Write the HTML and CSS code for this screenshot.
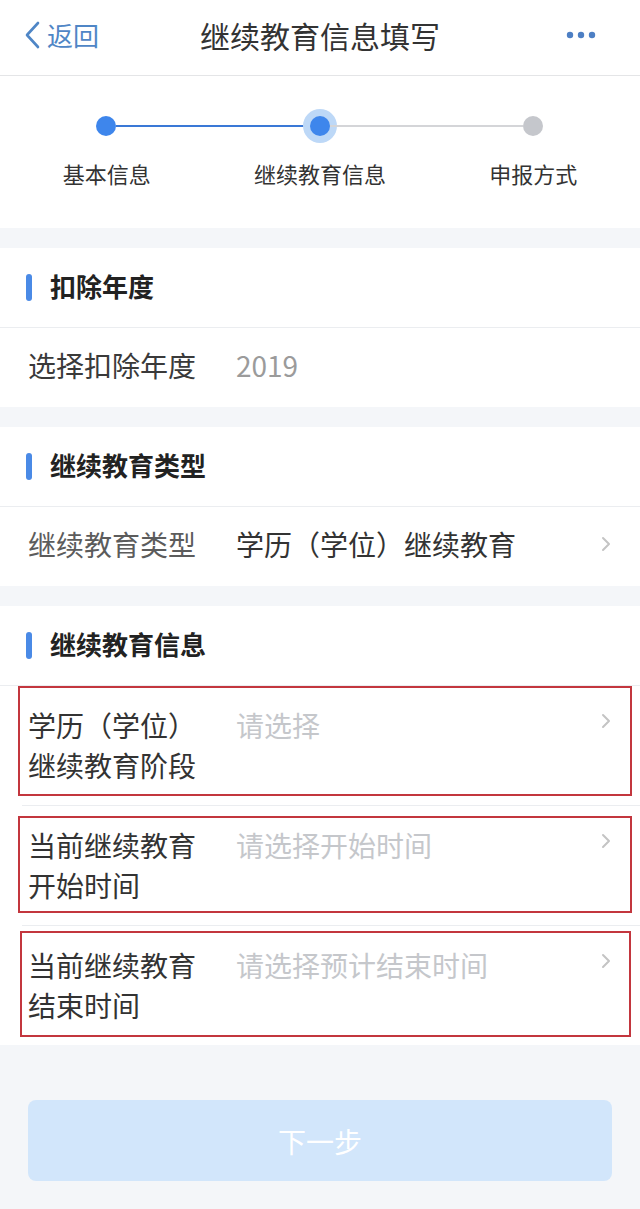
FILE: index.html
```html
<!DOCTYPE html>
<html lang="zh-CN">
<head>
  <meta charset="UTF-8">
  <meta name="viewport" content="width=device-width, initial-scale=1.0">
  <link rel="stylesheet" href="styles.css">
</head>
<body>
  <header class="navbar">
    <a class="nav-back">
      <svg class="back-icon" width="20" height="28" viewBox="0 0 20 28"><path d="M16 2 L5 14 L16 26" fill="none" stroke="#4f86c6" stroke-width="2.6" stroke-linecap="round" stroke-linejoin="round"/></svg>
      <span>返回</span>
    </a>
    <h1 class="nav-title">继续教育信息填写</h1>
    <span class="nav-more">
      <svg width="30" height="8" viewBox="0 0 30 8"><circle cx="4" cy="4" r="3.2" fill="#4d7fc4"/><circle cx="15" cy="4" r="3.2" fill="#4d7fc4"/><circle cx="26" cy="4" r="3.2" fill="#4d7fc4"/></svg>
    </span>
  </header>

  <!-- 步骤条 -->
  <section class="steps">
    <div class="step-track">
      <span class="dot done"></span>
      <span class="bar done"></span>
      <span class="dot current"></span>
      <span class="bar"></span>
      <span class="dot"></span>
    </div>
    <div class="step-labels">
      <span>基本信息</span>
      <span>继续教育信息</span>
      <span>申报方式</span>
    </div>
  </section>

  <section class="card">
    <div class="card-head"><span class="card-mark"></span>扣除年度</div>
    <div class="row">
      <span class="row-label">选择扣除年度</span>
      <span class="row-value muted">2019</span>
    </div>
  </section>

  <section class="card">
    <div class="card-head"><span class="card-mark"></span>继续教育类型</div>
    <div class="row">
      <span class="row-label soft">继续教育类型</span>
      <span class="row-value">学历（学位）继续教育</span>
      <svg class="chevron" width="10" height="16" viewBox="0 0 10 16"><path d="M2 2 L8 8 L2 14" fill="none" stroke="#c4c4c4" stroke-width="2" stroke-linecap="round" stroke-linejoin="round"/></svg>
    </div>
  </section>

  <section class="card">
    <div class="card-head"><span class="card-mark"></span>继续教育信息</div>
    <div class="field">
      <span class="field-label">学历（学位）<br>继续教育阶段</span>
      <span class="field-value">请选择</span>
      <svg class="chevron field-chevron" width="10" height="16" viewBox="0 0 10 16"><path d="M2 2 L8 8 L2 14" fill="none" stroke="#c4c4c4" stroke-width="2" stroke-linecap="round" stroke-linejoin="round"/></svg>
      <span class="mark mark-1"></span>
    </div>
    <div class="field">
      <span class="field-label">当前继续教育<br>开始时间</span>
      <span class="field-value">请选择开始时间</span>
      <svg class="chevron field-chevron" width="10" height="16" viewBox="0 0 10 16"><path d="M2 2 L8 8 L2 14" fill="none" stroke="#c4c4c4" stroke-width="2" stroke-linecap="round" stroke-linejoin="round"/></svg>
      <span class="mark mark-2"></span>
    </div>
    <div class="field">
      <span class="field-label">当前继续教育<br>结束时间</span>
      <span class="field-value">请选择预计结束时间</span>
      <svg class="chevron field-chevron" width="10" height="16" viewBox="0 0 10 16"><path d="M2 2 L8 8 L2 14" fill="none" stroke="#c4c4c4" stroke-width="2" stroke-linecap="round" stroke-linejoin="round"/></svg>
      <span class="mark mark-3"></span>
    </div>
  </section>

  <div class="footer">
    <button class="next-btn">下一步</button>
  </div>
</body>
</html>
```

FILE: styles.css
```css
body {
  margin: 0;
  background: #f4f6f9;
  font-family: "Noto Sans CJK SC", "Noto Sans", sans-serif;
  color: #333;
}

/* 顶部导航 */
.navbar {
  height: 69px;
  padding-bottom: 6px;
  background: #fff;
  border-bottom: 1px solid #e4e5e7;
  display: grid;
  grid-template-columns: 1fr auto 1fr;
  align-items: center;
}

.nav-back {
  display: flex;
  align-items: center;
  padding-left: 22px;
  color: #4f86c6;
  font-size: 26px;
}

.back-icon {
  margin-right: 5px;
}

.nav-title {
  margin: 0;
  font-size: 30px;
  font-weight: normal;
  color: #333;
}

.nav-more {
  justify-self: end;
  display: flex;
  padding-right: 44px;
}

/* 步骤条 */
.steps {
  background: #fff;
  padding: 40px 0 40px;
}

.step-track {
  display: flex;
  align-items: center;
  padding: 0 97px 0 96px;
}

.dot {
  width: 20px;
  height: 20px;
  border-radius: 50%;
  background: #c5c7cc;
  flex-shrink: 0;
}

.dot.done,
.dot.current {
  background: #3e86ec;
}

.dot.current {
  box-shadow: 0 0 0 7px #bdd8f7;
}

.bar {
  flex: 1;
  height: 2px;
  background: #d4d5d8;
}

.bar.done {
  background: #3a78d6;
}

.step-labels {
  display: grid;
  grid-template-columns: repeat(3, 1fr);
  margin-top: 22px;
  font-size: 22px;
  line-height: 30px;
  text-align: center;
  color: #333;
}

/* 卡片 */
.card {
  background: #fff;
  margin-top: 20px;
}

.card-head {
  height: 74px;
  padding-bottom: 5px;
  border-bottom: 1px solid #ebedf0;
  display: flex;
  align-items: center;
  padding-left: 26px;
  font-size: 26px;
  font-weight: bold;
  color: #222;
}

.card-mark {
  width: 6px;
  height: 27px;
  border-radius: 3px;
  background: #4a8ae6;
  margin-right: 18px;
  transform: translateY(2px);
}

.row {
  height: 74px;
  padding: 0 29px 5px 28px;
  display: flex;
  align-items: center;
  font-size: 28px;
}

.row-label {
  width: 208px;
  flex-shrink: 0;
  color: #3a3a3a;
}

.row-label.soft {
  color: #5c5c5c;
}

.row-value {
  flex: 1;
  color: #333;
}

.row-value.muted {
  color: #9b9b9b;
}

.chevron {
  flex-shrink: 0;
}

.field {
  position: relative;
  display: flex;
  align-items: flex-start;
  margin-left: 22px;
  padding: 19px 29px 20px 6px;
  font-size: 28px;
  line-height: 40px;
}

.field + .field {
  border-top: 1px solid #ebedf0;
}

.field-label {
  width: 208px;
  flex-shrink: 0;
  color: #333;
}

.field-value {
  flex: 1;
  color: #c5c7cb;
}

.field-chevron {
  margin-top: 8px;
}

/* 红色标注框 */
.mark {
  position: absolute;
  box-sizing: border-box;
  border: 2px solid #c3363e;
}

.mark-1 {
  top: 0;
  height: 110px;
  left: -4px;
  right: 8px;
}

.mark-2 {
  top: 10px;
  height: 97px;
  left: -4px;
  right: 8px;
}

.mark-3 {
  top: 5px;
  height: 106px;
  left: -2px;
  right: 9px;
}

/* 底部按钮 */
.footer {
  padding: 55px 28px 25px;
}

.next-btn {
  display: block;
  width: 100%;
  height: 81px;
  border: none;
  border-radius: 8px;
  background: #d2e6fb;
  color: #fff;
  font-family: inherit;
  font-size: 28px;
}
```
